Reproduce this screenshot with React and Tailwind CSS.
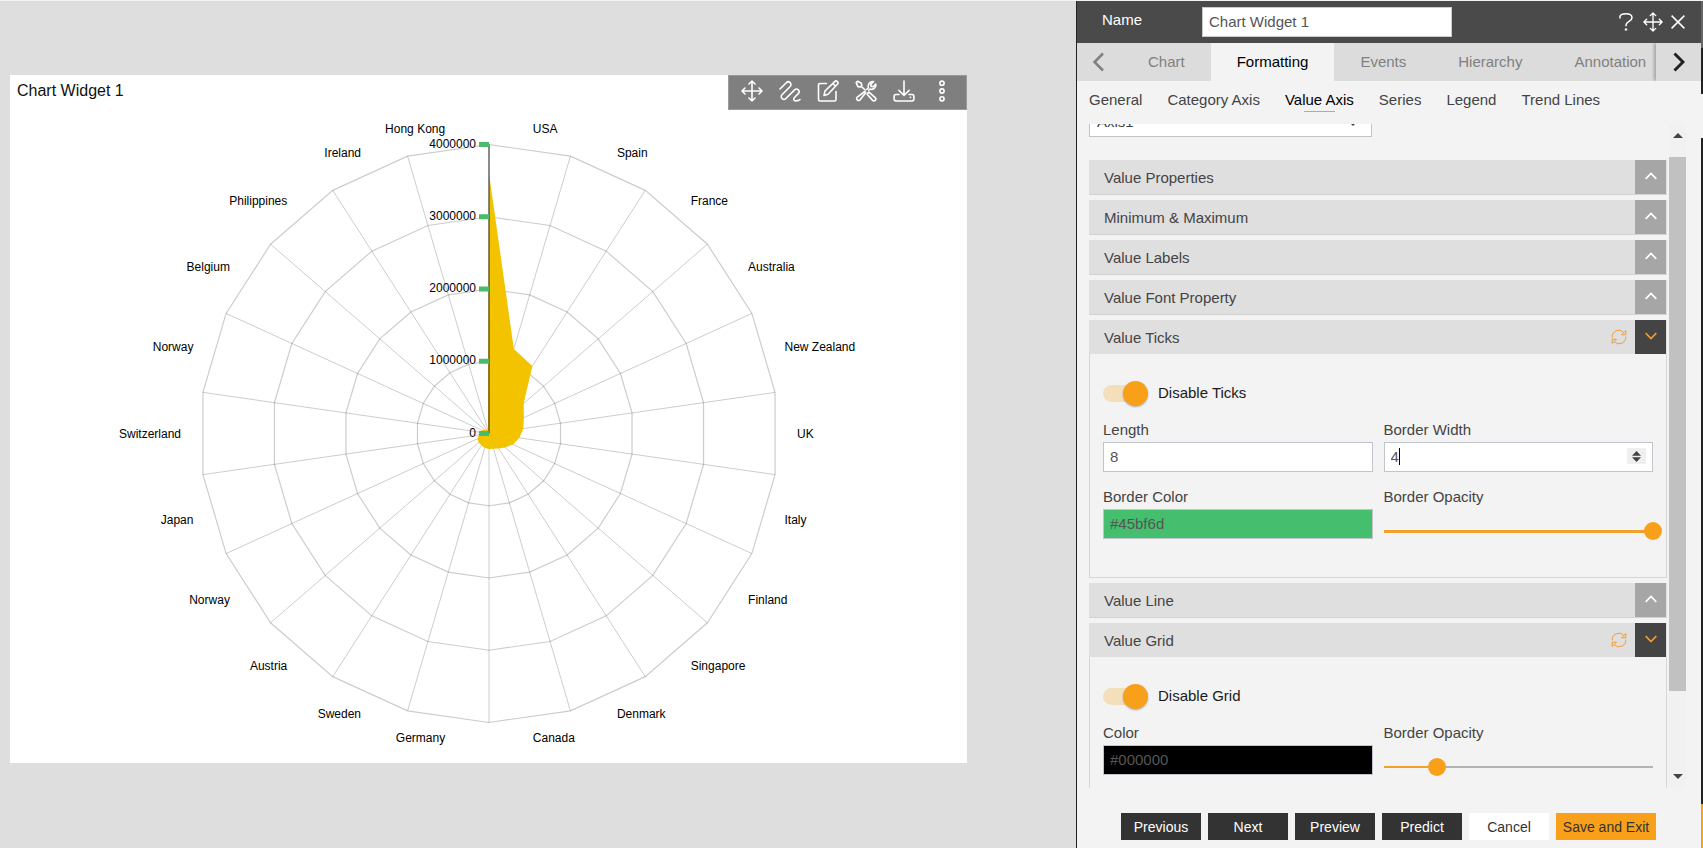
import { useState } from 'react';
import clsx from 'clsx';

const countries = [
  'USA', 'Spain', 'France', 'Australia', 'New Zealand', 'UK', 'Italy', 'Finland',
  'Singapore', 'Denmark', 'Canada', 'Germany', 'Sweden', 'Austria', 'Norway',
  'Japan', 'Switzerland', 'Norway', 'Belgium', 'Philippines', 'Ireland', 'Hong Kong',
];

const values = [
  3600000, 1220000, 1110000, 635000, 530000, 480000, 425000, 365000, 295000, 245000, 220000,
  215000, 208000, 195000, 188000, 178000, 140000, 125000, 110000, 85000, 60000, 50000,
];

const MAX = 4000000;
const RADIUS = 289;
const CX = 479;
const CY = 323;
const STEP = (2 * Math.PI) / countries.length;

const point = (radius, index) => [
  CX + radius * Math.sin(index * STEP),
  CY - radius * Math.cos(index * STEP),
];

const polygon = (radii) => radii.map((r, i) => point(r, i).join(',')).join(' ');

function RadarChart() {
  const levels = [1000000, 2000000, 3000000, 4000000];

  return (
    <svg viewBox="0 0 957 652" className="min-h-0 w-full flex-1" role="img" aria-label="Radar chart by country">
      <g fill="none" stroke="#000" strokeOpacity="0.2">
        {levels.map((level) => (
          <polygon key={level} points={polygon(countries.map(() => (level / MAX) * RADIUS))} strokeWidth="1.2" />
        ))}
        {countries.map((_, i) => {
          const [x, y] = point(RADIUS, i);
          return <line key={i} x1={CX} y1={CY} x2={x} y2={y} />;
        })}
      </g>

      <polygon points={polygon(values.map((v) => (v / MAX) * RADIUS))} fill="#f3c300" />
      <line x1={CX} y1={CY} x2={CX} y2={CY - RADIUS} stroke="#000" strokeOpacity="0.4" strokeWidth="2" />

      {/* Value axis ticks and labels */}
      {[0, ...levels].map((level) => {
        const y = CY - (level / MAX) * RADIUS;
        return (
          <g key={level}>
            <line x1={CX - 10} y1={y} x2={CX} y2={y} stroke="#4aba6d" strokeWidth="5" />
            <text x={CX - 13} y={y + 3} textAnchor="end" fontSize="12">{level}</text>
          </g>
        );
      })}

      {/* Category labels */}
      {countries.map((name, i) => {
        const [x, y] = point(308, i + 0.5);
        return (
          <text key={i} x={x} y={y + 4} fontSize="12" textAnchor={i < 11 ? 'start' : 'end'}>{name}</text>
        );
      })}
    </svg>
  );
}

function Icon({ className, width = 1.6, children }) {
  return (
    <svg viewBox="1 1 22 22" className={className} fill="none" stroke="currentColor" strokeWidth={width} strokeLinecap="round" strokeLinejoin="round" aria-hidden="true">
      {children}
    </svg>
  );
}

const MovePaths = () => (
  <path d="M12 2v20M2 12h20M9 5l3-3 3 3M9 19l3 3 3-3M5 9l-3 3 3 3M19 9l3 3-3 3" />
);

const tools = [
  { label: 'Move', icon: <MovePaths /> },
  {
    label: 'Animate',
    icon: <path d="M2 10l6.300-6.300a2.700 2.700 0 0 1 3.900 3.800L4 15.700a2.700 2.700 0 0 0 3.900 3.800l8.700-8.600a2.600 2.600 0 0 1 3.700 3.700l-3.600 3.600c-1.900 2-.6 3.700 1.300 3.700 1.800 0 3-.2 4-1.400" />,
  },
  {
    label: 'Edit',
    icon: (
      <>
        <path d="M10.500 4.500H4A1.500 1.500 0 0 0 2.500 6v14.500A1.500 1.500 0 0 0 4 22h14.500a1.500 1.500 0 0 0 1.500-1.500V12.500" />
        <path d="M8 16.500l1-4.500L18.700 2.600a1.900 1.900 0 0 1 2.700 2.700L12 15.200zM16.800 4.400l2.800 2.800" />
      </>
    ),
  },
  {
    label: 'Settings',
    icon: (
      <>
        <path d="M2.200 3.600l1.500-1.400 3.600 2 .5 2.500-1.400 1.300-2.500-.4zM7.500 7.500l3.600 3.500" />
        <path d="M13.600 14.400l1.400-1.300 6.200 5.600a1.800 1.800 0 0 1-2.600 2.700l-5.500-6.100z" />
        <path d="M12.600 10.500l1.800-1.800c-.8-3.400 1.300-6.600 5.200-6.200l-2.800 2.900.3 2 2 .3 2.700-2.700c.6 3.800-2.700 6.100-5.900 5.100l-1.200 1.200" />
        <path d="M10.800 12.500l-7.800 5.900a2 2 0 0 0 2.700 2.800l6-7.400z" />
      </>
    ),
  },
  {
    label: 'Download',
    icon: (
      <>
        <path d="M12 2v14M6.800 11.300L12 16.400l5.200-5.100" />
        <path d="M7 15.500H4A1.900 1.900 0 0 0 2.100 17.400v2.700A1.900 1.900 0 0 0 4 22h16a1.900 1.900 0 0 0 1.900-1.900v-2.700a1.900 1.900 0 0 0-1.900-1.900h-3M18.400 18.400h.1" />
      </>
    ),
  },
  {
    label: 'More',
    icon: (
      <>
        <circle cx="12" cy="4.200" r="2.100" />
        <circle cx="12" cy="12" r="2.100" />
        <circle cx="12" cy="19.800" r="2.100" />
      </>
    ),
  },
];

function ChartCard() {
  return (
    <section className="flex h-full flex-col bg-white">
      <div className="flex items-start justify-between">
        <h2 className="pt-1 pl-[7px] text-base text-[#111]">Chart Widget 1</h2>
        <div className="flex h-[35px] items-center gap-4 border border-[#9a9a9a] bg-[#7f7f7f] pr-[13px] pb-1 pl-3 text-white">
          {tools.map((tool) => (
            <button key={tool.label} type="button" aria-label={tool.label}>
              <Icon className="size-[22px]">{tool.icon}</Icon>
            </button>
          ))}
        </div>
      </div>
      <RadarChart />
    </section>
  );
}

function Chevron({ className, d, width }) {
  return (
    <svg viewBox="0 0 12 20" className={className} fill="none" stroke="currentColor" strokeWidth={width} aria-hidden="true">
      <path d={d} />
    </svg>
  );
}

function PanelHeader() {
  return (
    <header className="flex h-[42px] shrink-0 items-center bg-[#4a4a4a] pl-[25px] text-white">
      <label htmlFor="widget-name" className="w-[100px] pb-1">Name</label>
      <input id="widget-name" defaultValue="Chart Widget 1" className="h-[30px] w-[250px] border border-[#ccc] bg-white px-1.5 pb-0.5 text-[#555] outline-none" />
      <div className="ml-auto flex items-center gap-2 pr-4">
        <button type="button" aria-label="Help" className="mr-0.5">
          <svg viewBox="0 0 14 18" className="h-[18px] w-3.5" fill="none" stroke="currentColor" strokeWidth="1.5" aria-hidden="true">
            <path d="M1 5.500V3.200C1.500 1.600 4 .8 7 .8c3.500 0 6 1.300 6 4 0 3.900-6 3.400-6 7.500v1" />
            <path d="M5.800 16.500h2.400" strokeWidth="2" />
          </svg>
        </button>
        <button type="button" aria-label="Move panel">
          <Icon className="size-5" width={1.5}><MovePaths /></Icon>
        </button>
        <button type="button" aria-label="Close">
          <svg viewBox="0 0 14 14" className="size-3.5" stroke="currentColor" strokeWidth="1.5" aria-hidden="true">
            <path d="M.6.600l12.800 12.800M13.400.6L.6 13.400" />
          </svg>
        </button>
      </div>
    </header>
  );
}

function MainTabs() {
  const tabs = ['Chart', 'Formatting', 'Events', 'Hierarchy', 'Annotation'];

  return (
    <nav className="flex h-[38px] shrink-0 overflow-hidden bg-[#dcdcdc] text-[#808080]">
      <button type="button" aria-label="Previous tabs" className="flex w-[45px] shrink-0 items-center justify-center pr-1">
        <Chevron className="h-5 w-3" d="M11 1.500L2.500 10 11 18.500" width="2.5" />
      </button>
      <div className="flex flex-1 overflow-hidden">
        {tabs.map((tab) => (
          <button
            key={tab}
            type="button"
            className={clsx('shrink-0 px-[26px]', tab === 'Formatting' && 'bg-[#f3f3f3] text-black')}
          >
            {tab}
          </button>
        ))}
      </div>
      <button type="button" aria-label="Next tabs" className="z-10 flex w-[45px] shrink-0 items-center justify-center bg-[#dcdcdc] text-[#222] shadow-[-2px_0_3px_rgba(0,0,0,0.25)]">
        <Chevron className="h-5 w-3" d="M1.500 1.500L10 10l-8.500 8.500" width="3" />
      </button>
    </nav>
  );
}

function SubTabs() {
  const tabs = ['General', 'Category Axis', 'Value Axis', 'Series', 'Legend', 'Trend Lines'];

  return (
    <nav className="flex h-[43px] shrink-0 items-start gap-[25px] pt-2 pl-3 text-[#444]">
      {tabs.map((tab) => {
        const active = tab === 'Value Axis';
        return (
          <a key={tab} href="#" className={clsx('flex flex-col items-center leading-[22px]', active && 'text-black')}>
            {tab}
            {active && <span className="h-px w-[31px] bg-[#f0a12c]" />}
          </a>
        );
      })}
    </nav>
  );
}

function RefreshIcon() {
  return (
    <svg viewBox="0 0 16 16" className="size-4" fill="none" stroke="#f39a33" aria-hidden="true">
      <path d="M1.300 8.500A6.600 6.600 0 0 1 12.700 3.300M14.700 7.500A6.600 6.600 0 0 1 3.300 12.700" />
      <path d="M14.800 1.500v4.300h-4.300zM1.200 14.500v-4.300h4.300z" />
    </svg>
  );
}

function Section({ title, children }) {
  const open = Boolean(children);

  return (
    <section className="mb-[5px]">
      <div className={clsx('flex bg-[#dfdfdf]', open ? 'h-[34px]' : 'h-[35px] border-b border-[#d2d2d2]')}>
        <h3 className="flex-1 pl-[15px] leading-[35px] text-[#444]">{title}</h3>
        {open && (
          <button type="button" aria-label={`Reset ${title}`} className="mr-2">
            <RefreshIcon />
          </button>
        )}
        <button
          type="button"
          aria-label={`Toggle ${title}`}
          aria-expanded={open}
          className={clsx('mr-px flex h-[34px] w-[31px] items-center justify-center', open ? 'bg-[#444] text-[#f39a33]' : 'bg-[#a6a6a6] text-white')}
        >
          <svg viewBox="0 0 12 8" className="mb-0.5 h-2 w-3" fill="none" stroke="currentColor" strokeWidth="1.7" aria-hidden="true">
            <path d={open ? 'M.7 1.200L6 6.500l5.300-5.300' : 'M.7 6.800L6 1.500l5.300 5.300'} />
          </svg>
        </button>
      </div>
      {open && <div className="border border-t-0 border-[#d6d6d6] px-[13px] pt-[27px] pb-[38px]">{children}</div>}
    </section>
  );
}

function Toggle({ label }) {
  return (
    <label className="flex h-[25px] items-center gap-2.5 text-[#1a1a1a]">
      <input type="checkbox" role="switch" defaultChecked className="peer sr-only" />
      <span className="flex h-[17px] w-[45px] items-center justify-end rounded-full bg-linear-to-r from-[#f4dfbb] from-80% to-transparent to-80%">
        <span className="size-[25px] shrink-0 rounded-full bg-[#f9a01b] shadow-[0_1px_2px_rgba(0,0,0,0.3)]" />
      </span>
      {label}
    </label>
  );
}

function Field({ id, label, children }) {
  return (
    <div>
      <label htmlFor={id} className="block pb-0.5 leading-[21px] text-[#444]">{label}</label>
      {children}
    </div>
  );
}

function Slider({ id, initial, trackClass }) {
  const [value, setValue] = useState(initial);

  return (
    <div className="relative flex h-[30px] items-center pt-3.5">
      <div className={clsx('w-full bg-[#b3b3b3]', trackClass)}>
        <div className="h-full bg-[#f0a12c]" style={{ width: `${value}%` }} />
      </div>
      <input
        id={id}
        type="range"
        value={value}
        onChange={(e) => setValue(Number(e.target.value))}
        className="absolute -inset-x-[9px] top-3.5 h-4 appearance-none bg-transparent [&::-webkit-slider-thumb]:size-[18px] [&::-webkit-slider-thumb]:appearance-none [&::-webkit-slider-thumb]:rounded-full [&::-webkit-slider-thumb]:bg-[#f9a01b]"
      />
    </div>
  );
}

const inputClass = 'block h-[30px] w-full border border-[#c0c4cb] px-1.5 pb-0.5 text-[#555] outline-none';

function TicksForm() {
  return (
    <>
      <Toggle label="Disable Ticks" />
      <div className="mt-[13px] grid grid-cols-2 gap-x-[11px] gap-y-3.5">
        <Field id="tick-length" label="Length">
          <input id="tick-length" defaultValue="8" className={clsx(inputClass, 'bg-white')} />
        </Field>
        <Field id="tick-width" label="Border Width">
          <div className="relative">
            <input
              id="tick-width"
              type="number"
              defaultValue="4"
              className={clsx(inputClass, 'bg-white [appearance:textfield] [&::-webkit-inner-spin-button]:appearance-none')}
            />
            <span className="absolute top-1.5 left-[15px] h-[17px] w-px bg-black" />
            <span className="absolute top-1.5 right-[7px] flex h-4 w-[19px] items-center justify-center bg-[#efefef]">
              <svg viewBox="0 0 9 11" className="h-[11px] w-[9px] fill-[#444]" aria-hidden="true">
                <path d="M4.500 0L9 4.700H0zM4.500 11L0 6.300h9z" />
              </svg>
            </span>
          </div>
        </Field>
        <Field id="tick-color" label="Border Color">
          <input id="tick-color" defaultValue="#45bf6d" className={clsx(inputClass, 'bg-[#45bf6d]')} />
        </Field>
        <Field id="tick-opacity" label="Border Opacity">
          <Slider id="tick-opacity" initial={100} trackClass="h-[3px]" />
        </Field>
      </div>
    </>
  );
}

function GridForm() {
  return (
    <>
      <Toggle label="Disable Grid" />
      <div className="mt-[13px] grid grid-cols-2 gap-x-[11px] gap-y-3.5">
        <Field id="grid-color" label="Color">
          <input id="grid-color" defaultValue="#000000" className={clsx(inputClass, 'bg-black')} />
        </Field>
        <Field id="grid-opacity" label="Border Opacity">
          <Slider id="grid-opacity" initial={20} trackClass="h-0.5" />
        </Field>
      </div>
    </>
  );
}

function Scrollbar() {
  return (
    <div className="ml-0.5 flex w-[17px] shrink-0 flex-col items-center bg-[#f1f1f1]">
      <div className="flex h-[33px] items-start pt-[9px]">
        <svg viewBox="0 0 10 5" className="h-[5px] w-2.5 fill-[#444]" aria-hidden="true"><path d="M5 0l5 5H0z" /></svg>
      </div>
      <div className="min-h-0 w-full flex-1">
        <div className="h-7/8 bg-[#c1c1c1]" />
      </div>
      <div className="flex h-[21px] items-center pb-0.5">
        <svg viewBox="0 0 10 5" className="h-[5px] w-2.5 fill-[#444]" aria-hidden="true"><path d="M0 0h10L5 5z" /></svg>
      </div>
    </div>
  );
}

function FooterButtons() {
  return (
    <footer className="flex h-[60px] shrink-0 items-start justify-end gap-[7px] pt-[25px] pr-[45px] text-sm">
      {['Previous', 'Next', 'Preview', 'Predict'].map((name) => (
        <button key={name} type="button" className="h-[27px] w-20 bg-[#333] text-white">{name}</button>
      ))}
      <button type="button" className="h-[27px] w-20 bg-white text-[#333]">Cancel</button>
      <button type="button" className="h-[27px] w-[100px] bg-[#f9a01b] text-[#333]">Save and Exit</button>
    </footer>
  );
}

export default function App() {
  return (
    <div className="flex h-screen overflow-hidden border-t border-[#f3f3f3] bg-[#dedede] font-['Liberation_Sans',Arial,sans-serif]">
      <main className="min-w-0 flex-1 pt-[74px] pr-[109px] pb-[85px] pl-2.5">
        <ChartCard />
      </main>

      <aside className="flex w-[627px] shrink-0 border-l border-[#222] bg-[#f3f3f3] text-[15px]">
        <div className="flex min-w-0 flex-1 flex-col">
          <PanelHeader />
          <MainTabs />
          <SubTabs />

          <div className="flex min-h-0 flex-1 pr-[15px] pl-3">
            <div className="min-w-0 flex-1 overflow-hidden">
              <div className="relative -mt-[17px] mb-[23px] w-[283px]">
                <select aria-label="Axis" className="h-[30px] w-full appearance-none border border-[#c4c4c4] bg-white px-[7px] text-[#444]">
                  <option>Axis1</option>
                </select>
                <svg viewBox="0 0 10 5" className="pointer-events-none absolute top-3.5 right-3.5 h-[5px] w-2.5 fill-[#444]" aria-hidden="true">
                  <path d="M0 0h10L5 5z" />
                </svg>
              </div>

              <Section title="Value Properties" />
              <Section title="Minimum & Maximum" />
              <Section title="Value Labels" />
              <Section title="Value Font Property" />
              <Section title="Value Ticks"><TicksForm /></Section>
              <Section title="Value Line" />
              <Section title="Value Grid"><GridForm /></Section>
            </div>
            <Scrollbar />
          </div>

          <FooterButtons />
        </div>

        {/* Edge of the window behind the panel */}
        <div className="flex w-0.5 shrink-0 flex-col bg-[#222]">
          <div className="h-[47px] bg-[#666]" />
          <div className="h-[46px]" />
          <div className="h-11 bg-[#f3f3f3]" />
          <div className="flex-1" />
          <div className="h-11 bg-[#f9a01b]" />
        </div>
      </aside>
    </div>
  );
}
